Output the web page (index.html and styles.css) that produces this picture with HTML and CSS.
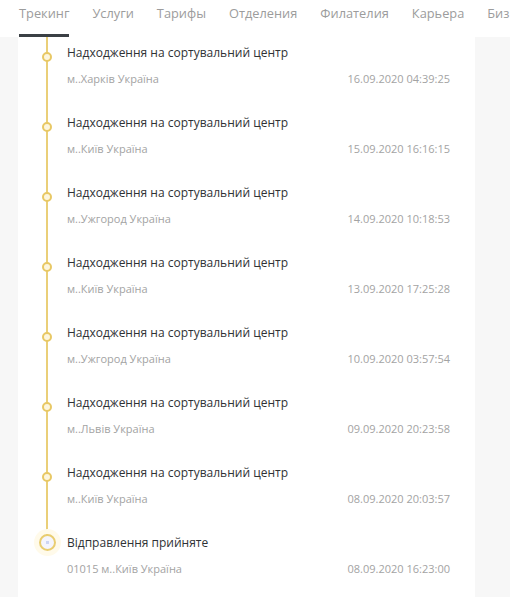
FILE: index.html
```html
<!DOCTYPE html>
<html lang="uk">
<head>
    <meta charset="UTF-8">
    <meta name="viewport" content="width=device-width, initial-scale=1.0">
    <title>Трекинг</title>
    <link rel="stylesheet" href="styles.css">
</head>
<body>

<header class="tabs">
    <a class="tab active">Трекинг</a>
    <a class="tab">Услуги</a>
    <a class="tab">Тарифы</a>
    <a class="tab">Отделения</a>
    <a class="tab">Филателия</a>
    <a class="tab">Карьера</a>
    <a class="tab">Биз</a>
</header>

<div class="card">
    <!-- История перемещений -->
    <div class="timeline">
        <div class="event">
            <div class="marker"><span class="dot"></span></div>
            <div class="info">
                <div class="title">Надходження на сортувальний центр</div>
                <div class="meta"><span>м..Харків Україна</span><span>16.09.2020 04:39:25</span></div>
            </div>
        </div>
        <div class="event">
            <div class="marker"><span class="dot"></span></div>
            <div class="info">
                <div class="title">Надходження на сортувальний центр</div>
                <div class="meta"><span>м..Київ Україна</span><span>15.09.2020 16:16:15</span></div>
            </div>
        </div>
        <div class="event">
            <div class="marker"><span class="dot"></span></div>
            <div class="info">
                <div class="title">Надходження на сортувальний центр</div>
                <div class="meta"><span>м..Ужгород Україна</span><span>14.09.2020 10:18:53</span></div>
            </div>
        </div>
        <div class="event">
            <div class="marker"><span class="dot"></span></div>
            <div class="info">
                <div class="title">Надходження на сортувальний центр</div>
                <div class="meta"><span>м..Київ Україна</span><span>13.09.2020 17:25:28</span></div>
            </div>
        </div>
        <div class="event">
            <div class="marker"><span class="dot"></span></div>
            <div class="info">
                <div class="title">Надходження на сортувальний центр</div>
                <div class="meta"><span>м..Ужгород Україна</span><span>10.09.2020 03:57:54</span></div>
            </div>
        </div>
        <div class="event">
            <div class="marker"><span class="dot"></span></div>
            <div class="info">
                <div class="title">Надходження на сортувальний центр</div>
                <div class="meta"><span>м..Львів Україна</span><span>09.09.2020 20:23:58</span></div>
            </div>
        </div>
        <div class="event">
            <div class="marker"><span class="dot"></span></div>
            <div class="info">
                <div class="title">Надходження на сортувальний центр</div>
                <div class="meta"><span>м..Київ Україна</span><span>08.09.2020 20:03:57</span></div>
            </div>
        </div>
        <div class="event last">
            <div class="marker"><span class="dot big"></span></div>
            <div class="info">
                <div class="title">Відправлення прийняте</div>
                <div class="meta"><span>01015 м..Київ Україна</span><span>08.09.2020 16:23:00</span></div>
            </div>
        </div>
    </div>
</div>

</body>
</html>
```

FILE: styles.css
```css
/* Общие стили */
body {
    margin: 0;
    padding: 0;
    font-family: 'Open Sans', 'Noto Sans', sans-serif;
    background-color: #f7f7f7;
    color: #333;
    height: 597px;
    overflow: hidden;
}

/* Вкладки */
.tabs {
    display: flex;
    gap: 23px;
    height: 37px;
    padding-left: 19px;
    background-color: #fff;
    white-space: nowrap;
    overflow: hidden;
    box-sizing: border-box;
}

.tab {
    font-size: 12.8px;
    line-height: 26px;
    color: #9c9c9c;
    border-bottom: 3px solid transparent;
    box-sizing: border-box;
    height: 37px;
    flex-shrink: 0;
}

.tab.active {
    border-bottom-color: #3b4045;
}

/* Карточка */
.card {
    margin: 0 35px 0 18px;
    padding: 0 25px 0 9px;
    background-color: #fff;
}

.event {
    display: flex;
    height: 70px;
}

.marker {
    width: 40px;
    flex-shrink: 0;
    display: flex;
    justify-content: center;
    align-items: flex-start;
    background: linear-gradient(#eacf78, #eacf78) center top / 2px 100% no-repeat;
}

.event.last .marker {
    background-size: 2px 10px;
}

.dot {
    width: 6px;
    height: 6px;
    margin-top: 15px;
    border: 2px solid #e8c865;
    border-radius: 50%;
    background-color: #fdf6dd;
}

.dot.big {
    width: 13px;
    height: 13px;
    margin-top: 7px;
    border-color: #e9cd70;
    background: radial-gradient(circle, #cdd5f3 0 1.5px, #f5f5fc 2px);
    box-shadow: 0 0 0 5px #fffaea;
}

.info {
    flex: 1;
    padding-top: 6px;
}

.title {
    font-size: 12px;
    line-height: 20px;
    color: #2f3235;
}

.meta {
    display: flex;
    justify-content: space-between;
    margin-top: 7px;
    font-size: 11px;
    line-height: 18px;
    color: #a3a3a3;
}
```
